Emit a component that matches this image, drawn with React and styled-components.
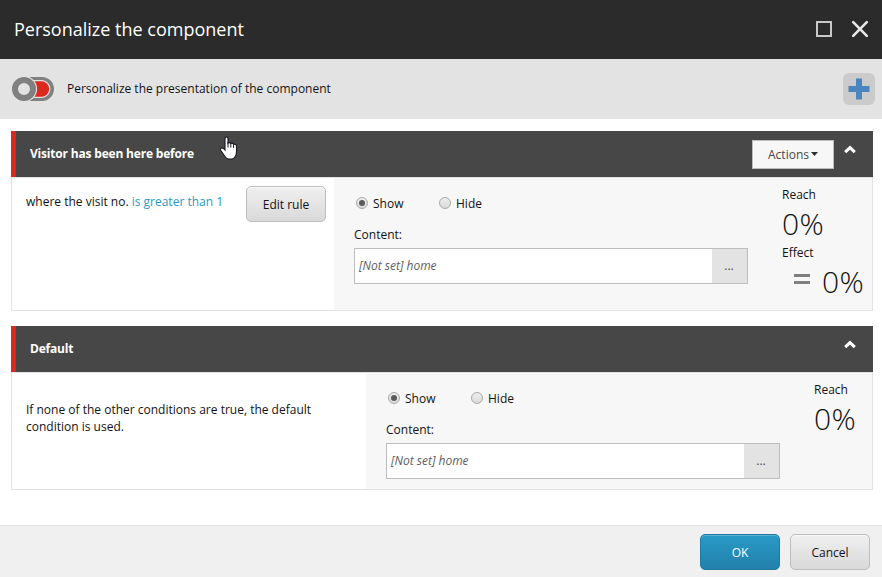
import React from "react";
import styled, { createGlobalStyle } from "styled-components";

const Global = createGlobalStyle`
  *, *::before, *::after { box-sizing: border-box; }
  body {
    margin: 0;
    background: #fff;
    color: #131313;
    font: 12px/17px "Open Sans", "Noto Sans", sans-serif;
  }
  button { font: inherit; cursor: pointer; }
`;

const Dialog = styled.div`
  position: relative;
  display: flex;
  flex-direction: column;
  width: 882px;
  height: 577px;
  overflow: hidden;
`;

const TitleBar = styled.header`
  display: flex;
  align-items: center;
  justify-content: space-between;
  height: 59px;
  padding: 0 13px 2px 14px;
  background: #2b2b2b;
  color: #fff;
`;

const Title = styled.h1`
  margin: 0;
  font-size: 18px;
  line-height: 24px;
  font-weight: 400;
`;

const WindowControls = styled.div`
  display: flex;
  align-items: center;
  gap: 18px;
  svg { display: block; }
`;

const ToggleBar = styled.div`
  display: flex;
  align-items: center;
  height: 60px;
  padding: 0 7px 0 12px;
  background: #e3e3e3;
`;

const ToggleLabel = styled.span`
  flex: 1;
  margin-left: 13px;
  padding-bottom: 2px;
`;

const AddButton = styled.button`
  display: grid;
  place-items: center;
  width: 32px;
  height: 32px;
  padding: 0;
  border: 0;
  border-radius: 6px;
  background: #cbcbcb;
`;

const Rules = styled.main`
  flex: 1;
  display: flex;
  flex-direction: column;
  gap: 15px;
  padding: 12px 9px 0 11px;
`;

const RuleHeader = styled.div`
  display: flex;
  align-items: center;
  height: 46px;
  padding: 0 17px 0 14px;
  border-left: 5px solid #dc291e;
  background: #474747;
`;

const RuleTitle = styled.h2`
  flex: 1;
  margin: 0;
  padding-bottom: 2px;
  color: #fff;
  font-size: 12px;
  line-height: 17px;
  font-weight: 700;
  letter-spacing: -0.19px;
`;

const ActionsButton = styled.button`
  display: flex;
  align-items: center;
  justify-content: center;
  gap: 2px;
  width: 82px;
  height: 29px;
  margin-right: 10px;
  padding: 0;
  border: 1px solid #bdbdbd;
  background: #f7f7f7;
  color: #474747;
`;

const CollapseButton = styled.button`
  display: block;
  height: 9px;
  margin-bottom: 10px;
  padding: 0;
  border: 0;
  background: none;
  svg { display: block; }
`;

const RuleBody = styled.div`
  display: flex;
  height: ${(p) => p.$height}px;
  border: 1px solid #e3e3e3;
`;

const Condition = styled.div`
  display: flex;
  align-items: flex-start;
  justify-content: space-between;
  width: ${(p) => p.$width}px;
  padding: 8px 8px 0 14px;
`;

const ConditionText = styled.p`
  width: ${(p) => p.$width || "auto"};
  margin: ${(p) => p.$top}px 0 0;
`;

const RuleValue = styled.span`
  color: #289bc8;
`;

const Settings = styled.div`
  flex: 1;
  display: flex;
  padding-left: 20px;
  background: #f7f7f7;
`;

const ContentForm = styled.div`
  width: 394px;
  margin-right: 34px;
  padding-top: 16px;
`;

const RadioGroup = styled.div`
  display: flex;
  padding-left: 2px;
`;

const RadioOption = styled.label`
  display: flex;
  align-items: center;
  gap: 5px;
  width: 83px;
  height: 18px;
`;

const Radio = styled.span`
  display: grid;
  place-items: center;
  width: 12px;
  height: 12px;
  border: 1px solid #a9a9a9;
  border-radius: 50%;
  background: linear-gradient(#eeeeee, #dadada);
  &::after {
    content: "";
    width: 6px;
    height: 6px;
    border-radius: 50%;
    background: ${(p) => (p.$checked ? "#5b5b5b" : "transparent")};
  }
`;

const FieldLabel = styled.div`
  margin: 14px 0 5px;
`;

const Picker = styled.div`
  display: flex;
  height: 36px;
  border: 1px solid #bdbdbd;
  background: #fff;
`;

const PickerValue = styled.span`
  flex: 1;
  padding: 8px 4px;
  color: #5e5e5e;
  font-style: italic;
`;

const BrowseButton = styled.button`
  width: 35px;
  padding: 0 1px 2px 0;
  border: 0;
  background: #e3e3e3;
  color: #474747;
`;

const Metrics = styled.div`
  padding-top: 8px;
`;

const MetricLabel = styled.div`
  line-height: 17px;
`;

const MetricValue = styled.div`
  display: flex;
  align-items: center;
  gap: 12px;
  height: 41px;
  padding-left: ${(p) => (p.$indented ? 12 : 0)}px;
  font-size: 30px;
  line-height: 41px;
  font-weight: 350;
  letter-spacing: 0.3px;
`;

const Equals = styled.span`
  width: 16px;
  height: 10px;
  margin-bottom: 6px;
  border: solid #808080;
  border-width: 3px 0;
`;

const Footer = styled.footer`
  display: flex;
  justify-content: flex-end;
  gap: 10px;
  height: 52px;
  padding: 8px 12px 0 0;
  border-top: 1px solid #e3e3e3;
  background: #f0f0f0;
`;

const Button = styled.button`
  flex: none;
  width: 80px;
  height: 36px;
  padding: 0;
  border: 1px solid ${(p) => (p.$primary ? "#2079a1" : "#bdbdbd")};
  border-radius: 5px;
  background: ${(p) =>
    p.$primary ? "linear-gradient(#289bc8, #2280aa)" : "linear-gradient(#f0f0f0, #d9d9d9)"};
  box-shadow: inset 0 1px 0 ${(p) => (p.$primary ? "#5ab0d3" : "#f7f7f7")};
  color: ${(p) => (p.$primary ? "#fff" : "#131313")};
`;

const Pointer = styled.svg`
  position: absolute;
  left: 219px;
  top: 136px;
`;

const Chevron = () => (
  <svg width="12" height="9" viewBox="0 0 12 9">
    <path d="M1.2 7.2 6 2.6 10.8 7.2" fill="none" stroke="#fff" strokeWidth="3" />
  </svg>
);

function ContentSettings() {
  return (
    <ContentForm>
      <RadioGroup>
        <RadioOption><Radio $checked />Show</RadioOption>
        <RadioOption><Radio />Hide</RadioOption>
      </RadioGroup>
      <FieldLabel>Content:</FieldLabel>
      <Picker>
        <PickerValue>[Not set] home</PickerValue>
        <BrowseButton>...</BrowseButton>
      </Picker>
    </ContentForm>
  );
}

export default function App() {
  return (
    <Dialog>
      <Global />
      <TitleBar>
        <Title>Personalize the component</Title>
        <WindowControls>
          <svg width="18" height="18" viewBox="0 0 18 18">
            <path d="M2 2H16V16H2Z" fill="none" stroke="#c8c8c8" strokeWidth="2" />
          </svg>
          <svg width="18" height="18" viewBox="0 0 18 18">
            <path d="M2.2 2.2 15.8 15.8M15.8 2.2 2.2 15.8" stroke="#e8e8e8" strokeWidth="2.6" strokeLinecap="round" />
          </svg>
        </WindowControls>
      </TitleBar>
      <ToggleBar>
        <svg width="42" height="24" viewBox="0 0 42 24">
          <path d="M18 0H30A12 12 0 0 1 30 24H18Z" fill="#808080" />
          <path d="M18 3H29.5A9 9 0 0 1 29.5 21H18Z" fill="#e3e3e3" />
          <path d="M18 4.3H29.5A7.7 7.7 0 0 1 29.5 19.7H18Z" fill="#dc291e" />
          <circle cx="12" cy="12" r="13.1" fill="#e3e3e3" />
          <circle cx="12" cy="12" r="9" fill="none" stroke="#808080" strokeWidth="6" />
        </svg>
        <ToggleLabel>Personalize the presentation of the component</ToggleLabel>
        <AddButton aria-label="Add rule">
          <svg width="22" height="22" viewBox="0 0 22 22">
            <path d="M8 .5H14V8H21.5V14H14V21.5H8V14H.5V8H8Z" fill="#4b84bf" />
          </svg>
        </AddButton>
      </ToggleBar>
      <Rules>
        <section>
          <RuleHeader>
            <RuleTitle>Visitor has been here before</RuleTitle>
            <ActionsButton>
              Actions
              <svg width="7" height="4" viewBox="0 0 7 4"><path d="M0 0H7L3.5 4Z" fill="#303030" /></svg>
            </ActionsButton>
            <CollapseButton aria-label="Collapse"><Chevron /></CollapseButton>
          </RuleHeader>
          <RuleBody $height={134}>
            <Condition $width={322}>
              <ConditionText $top={7}>
                where the visit no. <RuleValue>is greater than 1</RuleValue>
              </ConditionText>
              <Button>Edit rule</Button>
            </Condition>
            <Settings>
              <ContentSettings />
              <Metrics>
                <MetricLabel>Reach</MetricLabel>
                <MetricValue>0%</MetricValue>
                <MetricLabel>Effect</MetricLabel>
                <MetricValue $indented><Equals />0%</MetricValue>
              </Metrics>
            </Settings>
          </RuleBody>
        </section>
        <section>
          <RuleHeader>
            <RuleTitle>Default</RuleTitle>
            <CollapseButton aria-label="Collapse"><Chevron /></CollapseButton>
          </RuleHeader>
          <RuleBody $height={118}>
            <Condition $width={354}>
              <ConditionText $top={20} $width="300px">
                If none of the other conditions are true, the default condition is used.
              </ConditionText>
            </Condition>
            <Settings>
              <ContentSettings />
              <Metrics>
                <MetricLabel>Reach</MetricLabel>
                <MetricValue>0%</MetricValue>
              </Metrics>
            </Settings>
          </RuleBody>
        </section>
      </Rules>
      <Footer>
        <Button $primary>OK</Button>
        <Button>Cancel</Button>
      </Footer>
      <Pointer width="19" height="24" viewBox="0 0 19 24">
        <path
          d="M6 14V2.8Q6 1 7.5 1T9 2.8V7Q10.5 6 11.7 7.5Q13.3 6.5 14.5 8.3Q17.5 7.5 17.5 10.5V16Q17.5 19 15.5 21.5Q14.5 23 12 23H9.5Q7.5 23 6 20.5L1.8 14.5Q1 12.5 2.5 12Q4 11.7 6 14Z"
          fill="#fff" stroke="#171721" strokeWidth="1.1"
        />
        <path d="M9 6V11.5M11.8 7.5V11.5M14.6 8.5V12" stroke="#171721" />
      </Pointer>
    </Dialog>
  );
}
